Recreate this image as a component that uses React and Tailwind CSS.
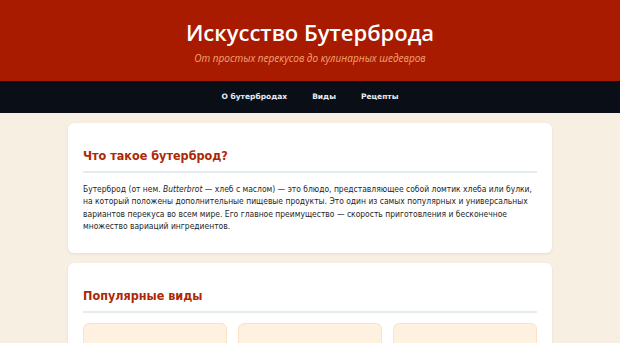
import React from 'react';

const navItems = ['О бутербродах', 'Виды', 'Рецепты'];

const Section = ({ title, children }) => (
  <section className="rounded-md bg-white px-[15px] pt-[24px] pb-[20px] shadow-[0_1px_3px_rgba(0,0,0,0.08)]">
    <h2 className="border-b-2 border-[#e4ecef] pb-[6px] font-['DejaVu_Sans_Condensed','DejaVu_Sans',sans-serif] text-[12.5px] font-bold leading-[18px] text-[#ad2806]">
      {title}
    </h2>
    {children}
  </section>
);

export default function App() {
  return (
    <div className="min-h-screen bg-[#f7efe1] font-['DejaVu_Sans',Verdana,sans-serif]">
      <header className="flex h-[81px] flex-col items-center bg-[#a81b00] pt-[17px]">
        <h1 className="font-['Open_Sans',sans-serif] text-[22px] font-semibold leading-[30px] text-white">
          Искусство Бутерброда
        </h1>
        <p className="mt-[4px] font-['Open_Sans',sans-serif] text-[10px] italic leading-[14px] text-[#f2a674]">
          От простых перекусов до кулинарных шедевров
        </p>
      </header>

      <nav className="flex h-[32px] items-center justify-center gap-[25px] bg-[#0a0f17]">
        {navItems.map((item) => (
          <a key={item} href="#" className="text-[7.5px] font-bold text-[#e8ecf2]">
            {item}
          </a>
        ))}
      </nav>

      <main className="mx-auto flex w-[484px] flex-col gap-[10px] pt-[10px]">
        <Section title="Что такое бутерброд?">
          <p className="mt-[10px] font-['DejaVu_Sans_Condensed','DejaVu_Sans',sans-serif] text-[8.45px] leading-[12.4px] text-[#1e1e1e]">
            Бутерброд (от нем. <em>Butterbrot</em> — хлеб с маслом) — это блюдо, представляющее собой ломтик хлеба или булки,<br />
            на который положены дополнительные пищевые продукты. Это один из самых популярных и универсальных<br />
            вариантов перекуса во всем мире. Его главное преимущество — скорость приготовления и бесконечное<br />
            множество вариаций ингредиентов.
          </p>
        </Section>

        <Section title="Популярные виды">
          <div className="mt-[10px] grid grid-cols-3 gap-[11px]">
            {[0, 1, 2].map((i) => (
              <div key={i} className="h-[80px] rounded-md border border-[#fbe3c5] bg-[#fef1df]" />
            ))}
          </div>
        </Section>
      </main>
    </div>
  );
}
